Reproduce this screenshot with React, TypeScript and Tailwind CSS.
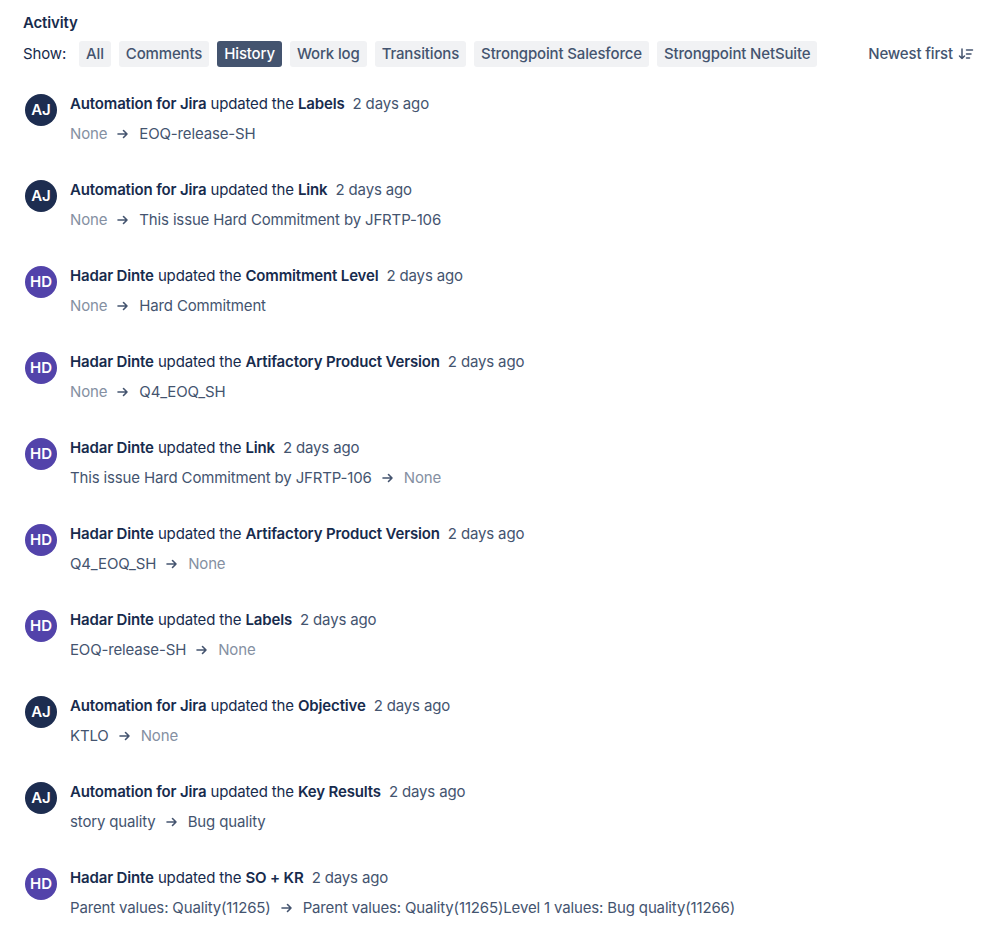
import React from "react";

type Item = {
  who: "AJ" | "HD";
  field: string;
  from: string;
  to: string;
  fromNone?: boolean;
  toNone?: boolean;
};

const items: Item[] = [
  { who: "AJ", field: "Labels", from: "None", to: "EOQ-release-SH", fromNone: true },
  { who: "AJ", field: "Link", from: "None", to: "This issue Hard Commitment by JFRTP-106", fromNone: true },
  { who: "HD", field: "Commitment Level", from: "None", to: "Hard Commitment", fromNone: true },
  { who: "HD", field: "Artifactory Product Version", from: "None", to: "Q4_EOQ_SH", fromNone: true },
  { who: "HD", field: "Link", from: "This issue Hard Commitment by JFRTP-106", to: "None", toNone: true },
  { who: "HD", field: "Artifactory Product Version", from: "Q4_EOQ_SH", to: "None", toNone: true },
  { who: "HD", field: "Labels", from: "EOQ-release-SH", to: "None", toNone: true },
  { who: "AJ", field: "Objective", from: "KTLO", to: "None", toNone: true },
  { who: "AJ", field: "Key Results", from: "story quality", to: "Bug quality" },
  {
    who: "HD",
    field: "SO + KR",
    from: "Parent values: Quality(11265)",
    to: "Parent values: Quality(11265)Level 1 values: Bug quality(11266)",
  },
];

const chips = ["All", "Comments", "History", "Work log", "Transitions", "Strongpoint Salesforce", "Strongpoint NetSuite"];

function Arrow() {
  return (
    <svg width="14" height="14" viewBox="0 0 14 14" className="mx-[9px] shrink-0">
      <path d="M2 7h9M7.5 3.5L11 7l-3.5 3.5" stroke="#44546f" strokeWidth="1.6" fill="none" strokeLinecap="round" strokeLinejoin="round" />
    </svg>
  );
}

function SortIcon() {
  return (
    <svg width="16" height="16" viewBox="0 0 16 16" className="ml-[5px]">
      <path d="M4 3v9.5M1.5 10l2.5 2.5L6.5 10" stroke="#44546f" strokeWidth="1.5" fill="none" strokeLinecap="round" strokeLinejoin="round" />
      <path d="M8.5 4h6M8.5 8h4.5M8.5 12h3" stroke="#44546f" strokeWidth="1.5" strokeLinecap="round" />
    </svg>
  );
}

export default function App() {
  return (
    <div
      className="w-[998px] h-[933px] bg-white text-[#172b4d] pl-[23px] pt-[14px] overflow-hidden tracking-[-0.15px]"
      style={{ fontFamily: "Inter, 'Noto Sans', sans-serif" }}
    >
      <div className="text-[15px] font-semibold leading-[18px]">Activity</div>
      <div className="flex items-center mt-[9px] pr-[24px] h-[26px]">
        <span className="text-[15px] text-[#172b4d] mr-[13px]">Show:</span>
        <div className="flex gap-[8px]">
          {chips.map((c) => (
            <span
              key={c}
              className={
                "h-[26px] px-[7px] rounded-[3px] flex items-center text-[15px] font-medium " +
                (c === "History" ? "bg-[#44546f] text-white" : "bg-[#f1f2f4] text-[#44546f]")
              }
            >
              {c}
            </span>
          ))}
        </div>
        <div className="ml-auto flex items-center text-[15px] font-medium text-[#44546f]">
          Newest first
          <SortIcon />
        </div>
      </div>
      <div className="mt-[27px] flex flex-col">
        {items.map((it, i) => (
          <div key={i} className="flex items-start h-[86px]">
            <div
              className={
                "w-[32px] h-[32px] rounded-full flex items-center justify-center text-white text-[15px] font-semibold mt-[0px] ml-[2px] shrink-0 tracking-normal " +
                (it.who === "AJ" ? "bg-[#1d2d50]" : "bg-[#5243aa]")
              }
            >
              {it.who}
            </div>
            <div className="ml-[13px] flex flex-col">
              <div className="text-[15px] leading-[20px]">
                <span className="font-semibold">{it.who === "AJ" ? "Automation for Jira" : "Hadar Dinte"}</span>
                <span> updated the </span>
                <span className="font-semibold">{it.field}</span>
                <span className="ml-[8px] text-[#44546f]">2 days ago</span>
              </div>
              <div className="flex items-center mt-[10px] text-[15px] leading-[20px]">
                <span className={it.fromNone ? "text-[#8590a2]" : "text-[#44546f]"}>{it.from}</span>
                <Arrow />
                <span className={it.toNone ? "text-[#8590a2]" : "text-[#44546f]"}>{it.to}</span>
              </div>
            </div>
          </div>
        ))}
      </div>
    </div>
  );
}
